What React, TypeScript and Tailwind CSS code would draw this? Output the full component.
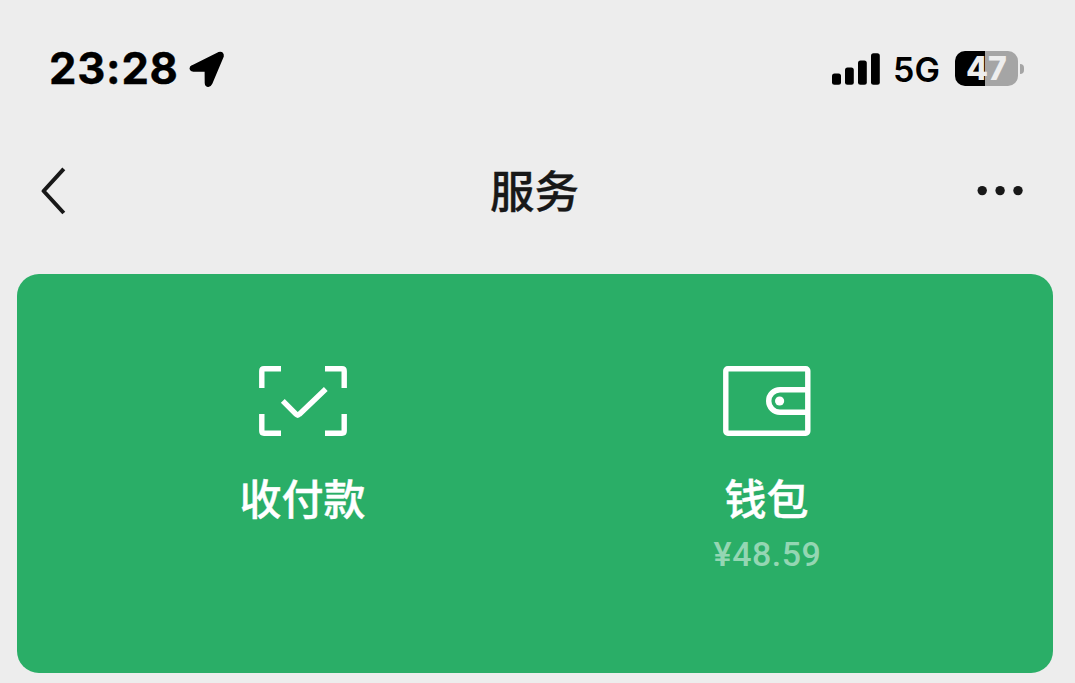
import type { ReactNode } from "react";

function StatusBar() {
  return (
    <header className="flex h-[138px] items-center justify-between pr-[51px] pl-[49px] font-['Inter',sans-serif] text-black">
      <div className="flex items-center">
        <span className="w-[140px] pb-[1px] text-[43.5px] leading-none font-bold tracking-[0.8px] whitespace-nowrap [-webkit-text-stroke:0.4px_currentColor]">23:28</span>
        <svg className="h-[37px] w-[36px]" viewBox="0 0 36 37" aria-hidden="true">
          <path
            d="M3.6 15.2 29.6 2.2Q34.2 0.9 33.6 5.4L22.1 32.6Q21 35 18.9 34.7 17 34.4 16.9 32L16.8 19.6 4.4 19.6Q2.2 19.4 1.7 17.7 1.6 16.1 3.6 15.2Z"
            stroke="currentColor"
            strokeWidth="2.4"
            strokeLinejoin="round"
          />
        </svg>
      </div>
      <div className="flex items-center pb-[1px]">
        <svg className="h-[32px] w-[48px]" viewBox="0 0 48 32" aria-hidden="true">
          <rect x="0" y="20.5" width="9" height="11.2" rx="2.5" />
          <rect x="13" y="14.5" width="8.8" height="17.2" rx="2.5" />
          <rect x="26" y="7.5" width="8.8" height="24.2" rx="2.5" />
          <rect x="39" y="0.2" width="8.8" height="31.5" rx="2.5" />
        </svg>
        <span className="ml-[13px] w-[48px] pt-[3px] text-[34px] leading-none font-semibold whitespace-nowrap">5G</span>
        <div className="ml-[14px] flex h-[35px] w-[63px] items-center justify-center rounded-[10px] bg-linear-to-r from-black from-[48%] to-[#a5a5a5] to-[48%]">
          <span className="text-[32px] leading-[35px] font-extrabold text-[#ededed]">47</span>
        </div>
        <div className="ml-[2px] h-[10px] w-[4px] rounded-r-full bg-[#a5a5a5]" />
      </div>
    </header>
  );
}

function NavBar() {
  return (
    <nav className="grid h-[106px] grid-cols-3 items-center pr-[52px] pl-[41px] text-[#181818]">
      <svg className="h-[48px] w-[26px]" viewBox="0 0 26 48" fill="none" stroke="currentColor" strokeWidth="4" aria-hidden="true">
        <path d="M22.8 1.8 2.6 24l20.2 22" strokeLinejoin="round" />
      </svg>
      <h1 className="pb-[3px] pl-[5px] text-center font-['Noto_Sans_CJK_SC',sans-serif] text-[44.5px] leading-none font-medium [-webkit-text-stroke:0.3px_currentColor]">服务</h1>
      <svg className="h-[12px] w-[46px] justify-self-end" viewBox="0 0 46 12" fill="currentColor" aria-hidden="true">
        <circle cx="5.2" cy="5.6" r="4.7" />
        <circle cx="23.1" cy="5.6" r="4.7" />
        <circle cx="41" cy="5.6" r="4.7" />
      </svg>
    </nav>
  );
}

function Service({ icon, label, amount }: { icon: ReactNode; label: string; amount?: string }) {
  return (
    <div className="flex flex-col items-center">
      {icon}
      <span className="mt-[39px] pr-[1px] font-['Noto_Sans_CJK_SC',sans-serif] text-[42px] leading-[44px] font-medium [-webkit-text-stroke:0.4px_currentColor]">{label}</span>
      {amount && (
        <span className="mt-[15px] pl-[1px] font-['Roboto',sans-serif] text-[34px] leading-[40px] font-medium tracking-[0.5px] text-[#94d6b3]">{amount}</span>
      )}
    </div>
  );
}

function PayIcon() {
  return (
    <svg className="h-[70px] w-[88px]" viewBox="0 0 88 70" fill="none" stroke="currentColor" strokeWidth="5.4" strokeLinejoin="round" aria-hidden="true">
      <path d="M2.8 22V5Q2.8 2.8 5 2.8H22M66 2.8H83Q85.2 2.8 85.2 5V22M85.2 48V65Q85.2 67.2 83 67.2H66M22 67.2H5Q2.8 67.2 2.8 65V48" />
      <path d="M23.8 34.8 37 48.2q1.7 1.7 3.4 0L66.8 23" />
    </svg>
  );
}

function WalletIcon() {
  return (
    <svg className="h-[70px] w-[88px]" viewBox="0 0 88 70" fill="none" stroke="currentColor" strokeWidth="5.4" aria-hidden="true">
      <rect x="2.8" y="2.8" width="82" height="64.4" rx="2" />
      <path d="M85 23.7H57a11.3 11.3 0 0 0 0 22.6h28" />
      <circle cx="56.6" cy="35" r="4.6" fill="currentColor" stroke="none" />
    </svg>
  );
}

export default function App() {
  return (
    <div className="flex h-[683px] w-[1075px] flex-col overflow-hidden bg-[#ededed]">
      <StatusBar />
      <NavBar />
      <main className="mt-[30px] mr-[22px] ml-[17px] grid h-[399px] grid-cols-[572px_356px] rounded-[22px] bg-[#2aae67] pt-[92px] text-white">
        <Service icon={<PayIcon />} label="收付款" />
        <Service icon={<WalletIcon />} label="钱包" amount="¥48.59" />
      </main>
    </div>
  );
}
